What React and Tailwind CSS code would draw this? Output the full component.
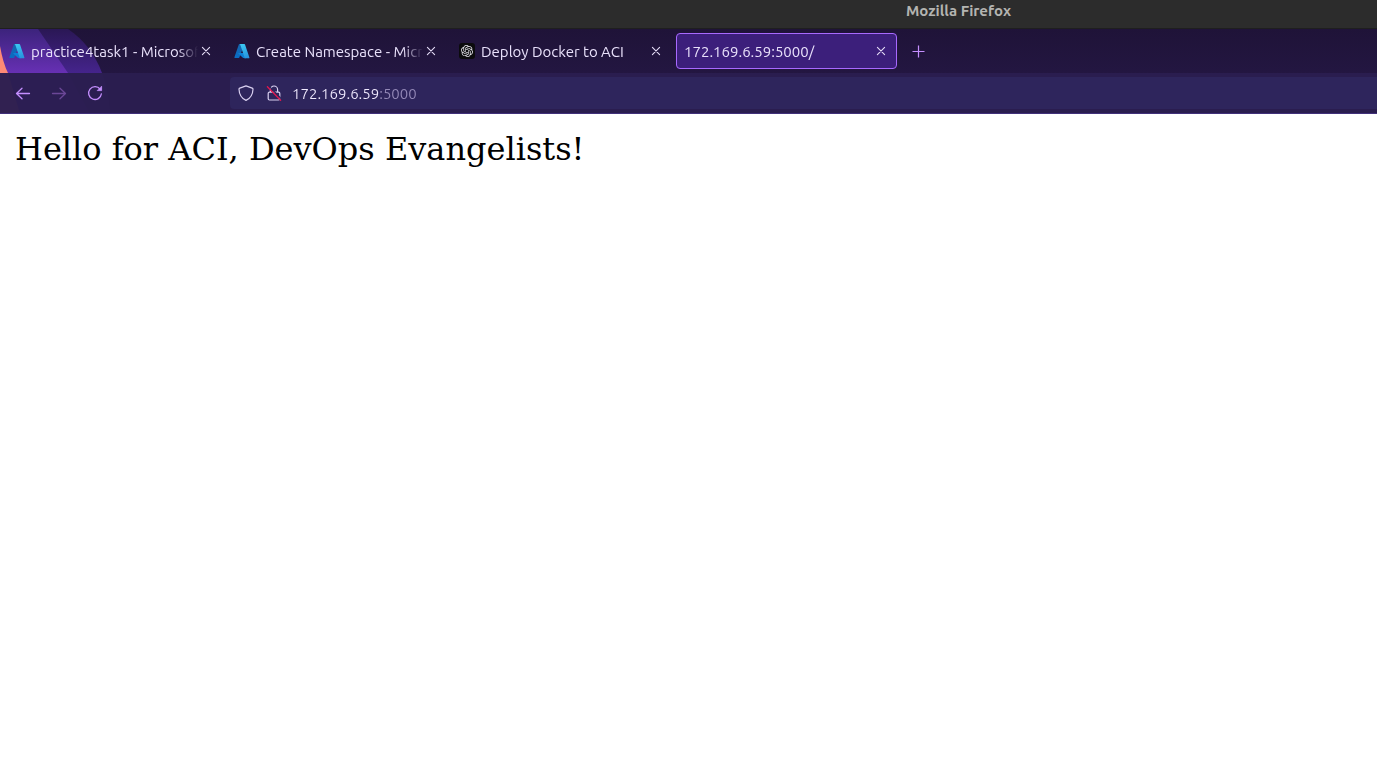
import React from "react";

function AzureIcon() {
  return (
    <svg className="size-4 shrink-0" viewBox="0 0 96 96" aria-hidden="true">
      <defs>
        <linearGradient id="azDark" x1="0.6" y1="0" x2="0.2" y2="1">
          <stop offset="0" stopColor="#1665ac" />
          <stop offset="1" stopColor="#0a6cc4" />
        </linearGradient>
        <linearGradient id="azLight" x1="0.3" y1="0" x2="0.6" y2="1">
          <stop offset="0" stopColor="#3cc9f2" />
          <stop offset="1" stopColor="#2893df" />
        </linearGradient>
      </defs>
      <path fill="url(#azDark)" d="M33 6h29L32 87a5 5 0 0 1-4 3H7a4 4 0 0 1-4-6L29 9a5 5 0 0 1 4-3z" />
      <path fill="#0d7fd6" d="M72 60H28a2 2 0 0 0-1 4l28 26 17 1z" />
      <path fill="url(#azLight)" d="M66 9a5 5 0 0 0-4-3H33a5 5 0 0 1 4 3l26 76a4 4 0 0 1-4 6h29a4 4 0 0 0 4-6z" />
    </svg>
  );
}

function KnotIcon() {
  return (
    <svg className="size-4 shrink-0" viewBox="0 0 16 16" aria-hidden="true">
      <rect width="16" height="16" rx="3" fill="#0b0b0d" />
      <g transform="translate(2 2) scale(.5)" fill="#e6e6ec">
        <path d="M22.28 9.82a5.98 5.98 0 0 0-.52-4.91 6.05 6.05 0 0 0-6.51-2.9A6.07 6.07 0 0 0 4.98 4.18a5.98 5.98 0 0 0-4 2.9 6.05 6.05 0 0 0 .74 7.1 5.98 5.98 0 0 0 .51 4.91 6.05 6.05 0 0 0 6.52 2.9A5.98 5.98 0 0 0 13.26 24a6.06 6.06 0 0 0 5.77-4.21 5.99 5.99 0 0 0 4-2.9 6.06 6.06 0 0 0-.75-7.07zm-9.02 12.61a4.48 4.48 0 0 1-2.88-1.04l.14-.08 4.78-2.76a.79.79 0 0 0 .39-.68v-6.74l2.02 1.17a.07.07 0 0 1 .04.05v5.58a4.5 4.5 0 0 1-4.49 4.5zM3.6 18.3a4.47 4.47 0 0 1-.54-3.01l.14.09 4.78 2.76a.77.77 0 0 0 .78 0l5.84-3.37v2.33a.08.08 0 0 1-.03.06L9.74 19.95a4.5 4.5 0 0 1-6.14-1.65zM2.34 7.9a4.49 4.49 0 0 1 2.37-1.98V11.6a.77.77 0 0 0 .38.68l5.82 3.35-2.02 1.17a.08.08 0 0 1-.07 0l-4.83-2.79A4.5 4.5 0 0 1 2.34 7.87zm16.6 3.85-5.84-3.38 2.01-1.16a.08.08 0 0 1 .07 0l4.83 2.79a4.49 4.49 0 0 1-.67 8.1v-5.68a.79.79 0 0 0-.41-.67zm2.01-3.02-.14-.09-4.77-2.78a.78.78 0 0 0-.79 0L9.41 9.23V6.9a.07.07 0 0 1 .03-.06l4.83-2.79a4.5 4.5 0 0 1 6.68 4.66zM8.31 12.86l-2.02-1.16a.08.08 0 0 1-.04-.06V6.07a4.5 4.5 0 0 1 7.38-3.45l-.14.08-4.78 2.76a.79.79 0 0 0-.4.68zm1.09-2.36 2.61-1.5 2.6 1.5v3l-2.6 1.5-2.6-1.5z" />
      </g>
    </svg>
  );
}

function CloseIcon() {
  return (
    <svg className="size-4" viewBox="0 0 16 16" fill="none" stroke="#e4dcf6" strokeWidth="1.1" strokeLinecap="round" aria-hidden="true">
      <path d="M4.4 4.4l7.2 7.2M11.6 4.4l-7.2 7.2" />
    </svg>
  );
}

function Tab({ icon, title, active }) {
  return (
    <div
      className={
        "flex h-9 w-[221px] shrink-0 items-center rounded-[4px] border px-[7px] " +
        (active ? "border-[#a869ff] bg-[#3c1f7b]" : "border-transparent")
      }
    >
      {icon && <span className="mr-1.5 shrink-0">{icon}</span>}
      <button
        type="button"
        role="tab"
        aria-selected={active}
        className="min-w-0 flex-1 overflow-hidden whitespace-nowrap pt-0.5 text-left text-[15px] leading-5 text-[#e9e1fb] [mask-image:linear-gradient(to_left,transparent,black_20px)]"
      >
        {title}
      </button>
      <button type="button" aria-label={"Close " + title} className="shrink-0">
        <CloseIcon />
      </button>
    </div>
  );
}

function ThemeArt() {
  return (
    <svg className="absolute left-0 top-0 h-[85px] w-[160px]" viewBox="0 0 160 85" aria-hidden="true">
      <defs>
        <linearGradient id="beam" x1="0" y1="0" x2="0" y2="1">
          <stop offset="0" stopColor="#3c237c" />
          <stop offset="0.52" stopColor="#6730b4" />
          <stop offset="1" stopColor="#6730b4" />
        </linearGradient>
        <linearGradient id="arc" x1="0" y1="0" x2="0" y2="1">
          <stop offset="0" stopColor="#2a1755" />
          <stop offset="0.52" stopColor="#45248c" />
          <stop offset="1" stopColor="#45248c" />
        </linearGradient>
      </defs>
      <path fill="url(#arc)" d="M0 0H68C84 11 95 25 102 44C107 58 109 70 110 85H0z" />
      <path fill="url(#beam)" d="M0 0H38L68 44L90 85H0z" />
      <path fill="#ff8a75" d="M0 17Q3 34 8 44L20 85H0z" />
    </svg>
  );
}

export default function App() {
  return (
    <div className="min-h-screen overflow-hidden bg-white font-['Ubuntu','Noto_Sans',sans-serif]">
      <header>
        <div className="flex h-[29px] items-start border-b border-[#1f1f1f] bg-[#2c2c2c] pl-[906px] pt-px">
          <span className="whitespace-nowrap text-[15px] font-bold leading-5 text-[#b4b4b1]">Mozilla Firefox</span>
        </div>
        <div className="relative bg-linear-to-b from-[#1f1338] to-[#27194a]">
          <ThemeArt />
          <div role="tablist" className="relative flex h-11 items-center gap-1 pl-px">
            <Tab icon={<AzureIcon />} title="practice4task1 - Microsoft Azure" active={false} />
            <Tab icon={<AzureIcon />} title="Create Namespace - Microsoft Azure" active={false} />
            <Tab icon={<KnotIcon />} title="Deploy Docker to ACI" active={false} />
            <Tab title="172.169.6.59:5000/" active={true} />
            <button type="button" aria-label="New tab" className="ml-[9px]">
              <svg className="size-4" viewBox="0 0 16 16" stroke="#c58fff" strokeWidth="1.2" aria-hidden="true">
                <path d="M8.5 2.5v12M2.5 8.5h12" />
              </svg>
            </button>
          </div>
          <nav className="relative flex h-[41px] items-center border-b border-[#40307a] bg-[#2a1e50]/97 pl-[15px]">
            <div className="flex w-[215px] shrink-0 gap-5">
              <button type="button" aria-label="Back">
                <svg className="size-4" viewBox="0 0 16 16" fill="none" stroke="#c58fff" strokeWidth="1.3" strokeLinecap="round" strokeLinejoin="round" aria-hidden="true">
                  <path d="M14.5 8.5H1.5M7 3.3L1.5 8.5L7 13.7" />
                </svg>
              </button>
              <button type="button" aria-label="Forward" disabled>
                <svg className="size-4" viewBox="0 0 16 16" fill="none" stroke="#6b4797" strokeWidth="1.3" strokeLinecap="round" strokeLinejoin="round" aria-hidden="true">
                  <path d="M1.5 8.5h13M9 3.3L14.5 8.5L9 13.7" />
                </svg>
              </button>
              <button type="button" aria-label="Reload">
                <svg className="size-4" viewBox="0 0 16 16" fill="none" stroke="#c58fff" strokeWidth="1.3" strokeLinecap="round" strokeLinejoin="round" aria-hidden="true">
                  <path d="M13.2 4.3A6.4 6.4 0 1 0 14.4 8.8" />
                  <path fill="#c58fff" d="M14.6 1.6V5.6H10.6z" strokeWidth="0.8" />
                </svg>
              </button>
            </div>
            <div className="flex h-8 min-w-0 flex-1 items-center rounded-l-[4px] bg-[#2e255c] pl-2">
              <button type="button" aria-label="Tracking protection" className="shrink-0">
                <svg className="size-4" viewBox="0 0 16 16" fill="none" stroke="#d9d0f0" strokeWidth="1.2" strokeLinejoin="round" aria-hidden="true">
                  <path d="M8 0.9L14.2 3.1C14.8 3.3 15 3.7 15 4.2C14.8 9.5 12.5 13.3 8 15.4C3.5 13.3 1.2 9.5 1 4.2C1 3.7 1.2 3.3 1.8 3.1z" />
                </svg>
              </button>
              <button type="button" aria-label="Connection is not secure" className="ml-3 shrink-0">
                <svg className="size-4" viewBox="0 0 16 16" fill="none" aria-hidden="true">
                  <path stroke="#d9d0f0" strokeWidth="1.2" d="M4.4 7V4.6a3.6 3.6 0 0 1 7.2 0V7M3.4 7.2h9.2a1.2 1.2 0 0 1 1.2 1.2v5.4a1.2 1.2 0 0 1-1.2 1.2H3.4a1.2 1.2 0 0 1-1.2-1.2V8.4a1.2 1.2 0 0 1 1.2-1.2z" />
                  <path stroke="#2e255c" strokeWidth="1.4" d="M2.6 0.8L15 13.6" />
                  <path stroke="#e2174f" strokeWidth="1.3" strokeLinecap="round" d="M1.4 1.8L14.6 15.2" />
                </svg>
              </button>
              <input
                type="text"
                aria-label="Address"
                defaultValue="172.169.6.59:5000"
                className="ml-[10px] h-8 min-w-0 flex-1 bg-linear-to-r from-[#f1ebff] from-[87px] to-[#9489b8] to-[87px] bg-clip-text pt-px text-[15px] text-transparent outline-none"
              />
            </div>
          </nav>
        </div>
      </header>
      <main className="px-[15px] py-4">
        <p className="font-['DejaVu_Serif',serif] text-[32px] leading-[38px] text-black">Hello for ACI, DevOps Evangelists!</p>
      </main>
    </div>
  );
}
